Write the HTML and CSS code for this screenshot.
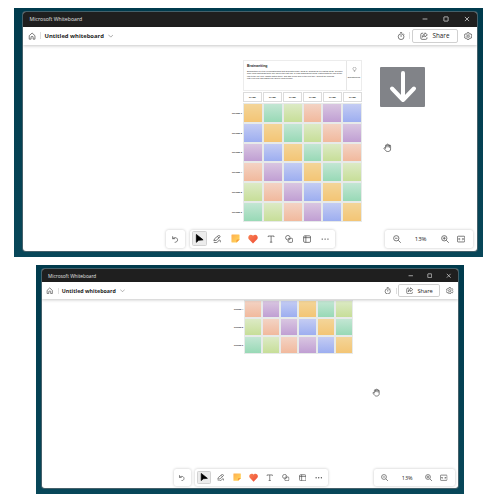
FILE: index.html
```html
<!DOCTYPE html>
<html lang="en">
<head>
<meta charset="utf-8">
<title>Microsoft Whiteboard</title>
<link rel="stylesheet" href="styles.css">
</head>
<body>
<svg class="defs" width="0" height="0" aria-hidden="true">
  <defs>
    <linearGradient id="heartFill" x1="0" y1="0" x2="1" y2="1"><stop offset="0" stop-color="#f98253"/><stop offset="1" stop-color="#ee4b35"/></linearGradient>
    <linearGradient id="stickyFill" x1="0" y1="0" x2="1" y2="1"><stop offset="0" stop-color="#ffad50"/><stop offset="1" stop-color="#ffdc5c"/></linearGradient>
  </defs>
  <symbol id="home" viewBox="0 0 20 20"><path d="M3 9l7-6.500L17 9v8.500h-4.500v-5.500q0-1-1-1h-3q-1 0-1 1v5.500H3z"/></symbol>
  <symbol id="chevron" viewBox="0 0 20 20"><path d="M1 6l9 9 9-9"/></symbol>
  <symbol id="timer" viewBox="0 0 20 20"><circle cx="10" cy="11.500" r="7"/><path d="M10 7.500V12M7.500 1.500h5M15.500 4l2 2"/></symbol>
  <symbol id="share" viewBox="0 0 20 20"><path d="M8 3H5Q2 3 2 6v9q0 3 3 3h9q3 0 3-3v-2M12 2l6 5-6 5V9q-4 0-6 4 0-8 6-8z"/></symbol>
  <symbol id="gear" viewBox="0 0 20 20"><path d="M8 1.500h4l.7 2.800 1.800 1 2.700-.8 2 3.400L17.200 10l2 2.100-2 3.400-2.700-.8-1.800 1-.7 2.800H8l-.7-2.800-1.800-1-2.700.8-2-3.400L2.800 10l-2-2.100 2-3.400 2.700.8 1.800-1z"/><circle cx="10" cy="10" r="3"/></symbol>
  <symbol id="undo" viewBox="0 0 20 20"><path d="M4 3v6h6M4 9c6-5 12-2 12 3 0 4-3 5.500-7 6"/></symbol>
  <symbol id="cursor" viewBox="0 0 20 20"><path d="M3 1v17.500l5-4.500 10-1z" fill="#000" stroke="#000"/></symbol>
  <symbol id="pen" viewBox="0 0 20 20"><path d="M2 14l2-5L13 1.500q2-1 3.500.5t0 3.500L8 13zM11 3.500l3.500 4M2 18.500h6c5 0 4-6 8-6s0 5 3 5"/></symbol>
  <symbol id="sticky" viewBox="0 0 20 20"><path d="M2 1h16q1 0 1 1v11l-6 6H2q-1 0-1-1V2q0-1 1-1z" fill="url(#stickyFill)" stroke="none"/><path d="M19 12h-4q-3 0-3 3v4z" fill="#f5953b" stroke="none"/></symbol>
  <symbol id="heart" viewBox="0 0 20 20"><path d="M10 19L1.700 10.500C-2 5 4-1 9 2.500l1 1 1-1C16-1 22 5 18.300 10.500z" fill="url(#heartFill)" stroke="none"/></symbol>
  <symbol id="text" viewBox="0 0 20 20"><path d="M3 5V2.500h14V5M10 2.500v15M7 17.500h6"/></symbol>
  <symbol id="shapes" viewBox="0 0 20 20"><path d="M6 12A5.500 5.500 0 1 1 12.500 6"/><rect x="7.500" y="8" width="11" height="10" rx="2.500"/><path d="M8 12q5 1 4.500-5"/></symbol>
  <symbol id="template" viewBox="0 0 20 20"><rect x="1.500" y="2" width="17" height="16" rx="3"/><path d="M1.500 6.500h17M7 2v16"/></symbol>
  <symbol id="dots" viewBox="0 0 20 20"><g fill="#444" stroke="none"><circle cx="3" cy="10" r="1.700"/><circle cx="10" cy="10" r="1.700"/><circle cx="17" cy="10" r="1.700"/></g></symbol>
  <symbol id="zoomout" viewBox="0 0 20 20"><circle cx="8" cy="8" r="6.500"/><path d="M5 8h6M13 13l6 6"/></symbol>
  <symbol id="zoomin" viewBox="0 0 20 20"><circle cx="8" cy="8" r="6.500"/><path d="M4.500 8h7M8 4.500v7M13 13l6 6"/></symbol>
  <symbol id="fit" viewBox="0 0 20 20"><rect x="1" y="3" width="18" height="14" rx="2"/><path d="M8 10H4l2-2M4 10l2 2M12 10h4l-2-2M16 10l-2 2"/></symbol>
  <symbol id="bulb" viewBox="0 0 20 20"><path d="M7 14q0-2-2-4a6 6 0 1 1 10 0q-2 2-2 4zM7.500 18h5"/></symbol>
  <symbol id="hand" viewBox="0 0 20 20"><path d="M6 11V5q0-2 1.500-2T9 4.500q0-3 1.700-3t1.600 3q.3-2 1.700-2t1.500 3q0-1.500 1.200-1.500T18 6v7c0 4-3 6-7 6-3 0-5-2-9-8 1-2 3-1 4 1M9 4v5M12.300 4v5M15.500 5v5" fill="#fff"/></symbol>
  <symbol id="min" viewBox="0 0 20 20"><path d="M2 10h16"/></symbol>
  <symbol id="max" viewBox="0 0 20 20"><rect x="3" y="3" width="14" height="14" rx="1"/></symbol>
  <symbol id="close" viewBox="0 0 20 20"><path d="M3 3l14 14M17 3L3 17"/></symbol>
</svg>

<section class="desktop">
  <div class="window">
    <div class="titlebar">
      <span class="app-name">Microsoft Whiteboard</span>
      <svg class="win-icon"><use href="#min"/></svg>
      <svg class="win-icon"><use href="#max"/></svg>
      <svg class="win-icon"><use href="#close"/></svg>
    </div>
    <header class="appbar">
      <svg class="icon"><use href="#home"/></svg>
      <span class="divider home-divider"></span>
      <span class="board-name">Untitled whiteboard</span>
      <svg class="chevron"><use href="#chevron"/></svg>
      <svg class="icon timer"><use href="#timer"/></svg>
      <span class="divider"></span>
      <span class="share"><svg class="icon"><use href="#share"/></svg>Share</span>
      <svg class="icon gear"><use href="#gear"/></svg>
    </header>
    <main class="canvas">
      <div class="board">
        <div class="intro">
          <div class="intro-text">
            <h1>Brainwriting</h1>
            <p>Brainwriting is a type of brainstorming that generates many ideas by building off of existing ideas. To begin,<br>have each participant write one idea in the first row. In each subsequent round, participants will look at the<br>row to the left, copy what's written there, and add a new idea in the next box. Repeat the process<br>until everyone has added one idea to each column.</p>
          </div>
          <div class="intro-side"><svg class="bulb"><use href="#bulb"/></svg><span>Brainstorming</span></div>
        </div>
        <div class="names"><b>NAME</b><b>NAME</b><b>NAME</b><b>NAME</b><b>NAME</b><b>NAME</b></div>
        <div class="rounds"></div>
      </div>
      <div class="scroll-hint"><svg viewBox="0 0 45 40"><path d="M23 6v27M12 21.500L23 33l11-11.500"/></svg></div>
      <svg class="hand"><use href="#hand"/></svg>
    </main>
    <div class="tools">
      <div class="panel"><span class="tool"><svg class="icon"><use href="#undo"/></svg></span></div>
      <div class="panel">
        <span class="tool selected"><svg class="icon large"><use href="#cursor"/></svg></span>
        <span class="tool"><svg class="icon"><use href="#pen"/></svg></span>
        <span class="tool"><svg class="icon large"><use href="#sticky"/></svg></span>
        <span class="tool"><svg class="icon heart"><use href="#heart"/></svg></span>
        <span class="tool"><svg class="icon"><use href="#text"/></svg></span>
        <span class="tool"><svg class="icon"><use href="#shapes"/></svg></span>
        <span class="tool"><svg class="icon"><use href="#template"/></svg></span>
        <span class="tool"><svg class="icon"><use href="#dots"/></svg></span>
      </div>
    </div>
    <div class="panel zoom">
      <svg class="icon"><use href="#zoomout"/></svg>
      <span class="percent">13%</span>
      <svg class="icon"><use href="#zoomin"/></svg>
      <svg class="icon"><use href="#fit"/></svg>
    </div>
  </div>
</section>
<section class="desktop scrolled"></section>
<script src="board.js"></script>
</body>
</html>
```

FILE: styles.css
```css
* { box-sizing: border-box; }
body {
  margin: 0;
  width: 500px;
  height: 500px;
  overflow: hidden;
  background: #fff;
  font-family: "Open Sans", "Noto Sans", sans-serif;
  color: #242424;
}
svg { display: block; flex: none; }
.defs { position: absolute; }

/* --u is one design unit; the second desktop is drawn slightly smaller. */
.desktop {
  --u: 1px;
  width: 469px;
  height: 249px;
  margin: 8px 0 0 14px;
  padding: 4px 6px 6px 9px;
  background: linear-gradient(#003b4d, #084759);
}
.desktop.scrolled {
  --u: .9145px;
  width: 428px;
  height: 229px;
  margin: 8px 0 0 36px;
  padding: 4px 6px 6px 6px;
}
.window {
  position: relative;
  display: flex;
  flex-direction: column;
  height: 100%;
  overflow: hidden;
  background: #fff;
  border-radius: calc(var(--u) * 3);
  box-shadow: 0 0 0 1px #45606a;
}
.titlebar {
  display: flex;
  align-items: center;
  flex: none;
  height: calc(var(--u) * 14.500);
  padding: 0 calc(var(--u) * 7) 0 calc(var(--u) * 6.500);
  background: #1f1f1f;
  color: #e2e2e2;
}
.app-name { flex: 1; font-size: calc(var(--u) * 5.200); white-space: nowrap; }
.win-icon {
  width: calc(var(--u) * 6);
  height: calc(var(--u) * 6);
  margin-left: calc(var(--u) * 15);
  fill: none;
  stroke: #dedede;
  stroke-width: 2.500;
}
.appbar {
  position: relative;
  z-index: 1;
  display: flex;
  align-items: center;
  flex: none;
  height: calc(var(--u) * 18.500);
  padding: 0 calc(var(--u) * 4.500);
  background: #fff;
  box-shadow: 0 1px 3px rgba(0, 0, 0, .22);
}
.icon {
  width: calc(var(--u) * 8.200);
  height: calc(var(--u) * 8.200);
  fill: none;
  stroke: #444;
  stroke-width: 1.700;
}
.divider { width: 1px; height: calc(var(--u) * 7); background: #dedede; }
.home-divider { margin: 0 calc(var(--u) * 3.300) 0 calc(var(--u) * 4.500); }
.board-name { font-size: calc(var(--u) * 5.850); font-weight: 700; white-space: nowrap; }
.chevron {
  width: calc(var(--u) * 5.500);
  height: calc(var(--u) * 5.500);
  margin-left: calc(var(--u) * 4);
  fill: none;
  stroke: #777;
  stroke-width: 2.200;
}
.timer { margin: 0 calc(var(--u) * 4) 0 auto; }
.share {
  display: flex;
  align-items: center;
  width: calc(var(--u) * 46);
  height: calc(var(--u) * 14.500);
  margin-left: calc(var(--u) * 2);
  padding-left: calc(var(--u) * 7);
  gap: calc(var(--u) * 4.500);
  border: 1px solid #d0d0d0;
  border-radius: calc(var(--u) * 2);
  font-size: calc(var(--u) * 6.300);
}
.gear { margin-left: calc(var(--u) * 6.500); }

.canvas { position: relative; flex: 1; min-height: 0; overflow: hidden; }
.board {
  width: calc(var(--u) * 130);
  margin: calc(var(--u) * 15) 0 0 calc(var(--u) * 209);
  font-family: "Liberation Sans", Arial, sans-serif;
}
.scrolled .board { margin: 1px 0 0 calc(var(--u) * 210); }
.intro {
  display: flex;
  height: calc(var(--u) * 31);
  margin-left: calc(var(--u) * 11);
  border: 1px solid #ececec;
}
.intro-text { width: calc(var(--u) * 103); padding: calc(var(--u) * 2.500) 0 0 calc(var(--u) * 3); border-right: 1px solid #e6e6e6; white-space: nowrap; }
.intro h1 { margin: 0; font-size: calc(var(--u) * 3.500); line-height: calc(var(--u) * 4.500); }
.intro p { margin: calc(var(--u) * 2) 0 0; font-size: calc(var(--u) * 2.040); line-height: calc(var(--u) * 2.350); }
.intro-side { display: flex; flex: 1; flex-direction: column; align-items: center; padding-top: calc(var(--u) * 6); font-size: calc(var(--u) * 2); }
.intro-side span { margin-top: calc(var(--u) * 4); }
.bulb { width: calc(var(--u) * 5); height: calc(var(--u) * 5); fill: none; stroke: #777; stroke-width: 2; }
.names {
  display: grid;
  grid-template-columns: repeat(6, 1fr);
  gap: calc(var(--u) * 1);
  height: calc(var(--u) * 10);
  margin: calc(var(--u) * 1) 0 calc(var(--u) * 1) calc(var(--u) * 11);
}
.names b { display: grid; place-items: center; border: 1px solid #dcdcdc; font-size: calc(var(--u) * 2.300); }
.round { display: grid; grid-template-columns: calc(var(--u) * 11) repeat(6, 1fr); height: calc(var(--u) * 19.750); }
.round b { align-self: center; font-size: calc(var(--u) * 2.250); white-space: nowrap; }
.note { border: calc(var(--u) * .8) solid #e7eae9; }
.amber { background: linear-gradient(#f3d599, #f3c575); }
.mint { background: linear-gradient(#c3e6d3, #98d9b6); }
.lime { background: linear-gradient(#dceac5, #c7de98); }
.peach { background: linear-gradient(#f3d3c4, #f1b99d); }
.violet { background: linear-gradient(#d9c6e1, #c09fd3); }
.blue { background: linear-gradient(#c4ccf3, #9daef0); }

/* Overlays on the canvas */
.scroll-hint {
  position: absolute;
  left: 357px;
  top: 22px;
  width: 45px;
  height: 40px;
  background: #818388;
  border-radius: 1px;
}
.scroll-hint svg { width: 45px; height: 40px; fill: none; stroke: #fff; stroke-width: 4; stroke-linecap: round; stroke-linejoin: round; }
.hand { position: absolute; left: 360px; top: 97.500px; width: 8.500px; height: 9.500px; fill: none; stroke: #444; stroke-width: 1.700; }
.scrolled .hand { left: 330px; top: 89px; width: 8px; height: 9px; }
.tools {
  position: absolute;
  left: calc(var(--u) * 143);
  bottom: calc(var(--u) * 3);
  display: flex;
  gap: calc(var(--u) * 5);
}
.scrolled .tools, .scrolled .zoom { bottom: 2px; }
.scrolled .tools { left: 131.500px; }
.panel {
  display: flex;
  align-items: center;
  height: calc(var(--u) * 18.500);
  padding: 0 calc(var(--u) * .4);
  background: #fff;
  border-radius: calc(var(--u) * 2.500);
  box-shadow: 0 0 3px rgba(0, 0, 0, .24);
}
.tool { display: grid; place-items: center; width: calc(var(--u) * 18); height: calc(var(--u) * 15); }
.tool.selected { width: calc(var(--u) * 15); margin: 0 calc(var(--u) * 1.500); background: #ececec; border: 1px solid #d2d2d2; border-radius: calc(var(--u) * 1.500); }
.large { width: calc(var(--u) * 9); height: calc(var(--u) * 9); }
.heart { width: calc(var(--u) * 10); height: calc(var(--u) * 10); }
.zoom {
  position: absolute;
  right: calc(var(--u) * 4);
  bottom: calc(var(--u) * 3);
  width: calc(var(--u) * 88.500);
  padding: 0 calc(var(--u) * 8);
}
.scrolled .zoom { right: 3px; }
.percent { flex: 1; text-align: center; font-size: calc(var(--u) * 6); }
.zoom .icon + .icon { margin-left: calc(var(--u) * 8); }
```

FILE: board.js
```js
const colors = ["amber", "mint", "lime", "peach", "violet", "blue"];
const rounds = document.querySelector(".rounds");

// Each round shifts the colours one column to the right.
for (let r = 0; r < 6; r++) {
  const row = document.createElement("div");
  row.className = "round";
  const label = document.createElement("b");
  label.textContent = "ROUND " + (r + 1);
  row.append(label);
  for (let c = 0; c < 6; c++) {
    const note = document.createElement("div");
    note.className = "note " + colors[(c - r + 6) % 6];
    row.append(note);
  }
  rounds.append(row);
}

// The second window is scrolled down to the last three rounds.
const scrolled = document.querySelector(".window").cloneNode(true);
scrolled.querySelectorAll(".intro, .names, .scroll-hint, .round:nth-child(-n+3)").forEach(el => el.remove());
document.querySelector(".scrolled").append(scrolled);
```
